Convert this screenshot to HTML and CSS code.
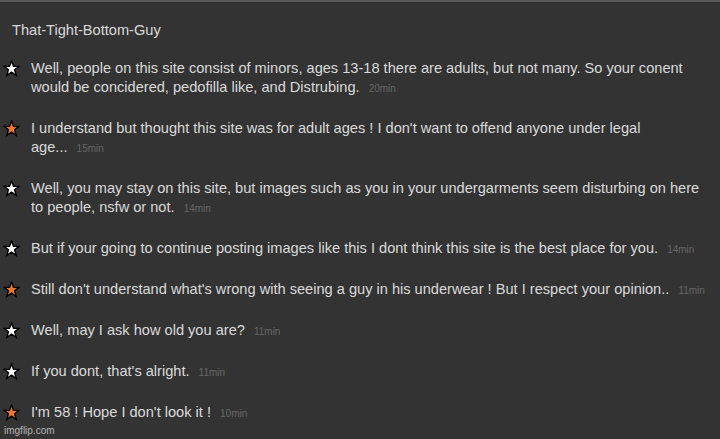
FILE: index.html
```html
<!DOCTYPE html>
<html>
<head>
<meta charset="utf-8">
<link rel="stylesheet" href="styles.css">
</head>
<body>
<div class="page">
  <div class="title">That-Tight-Bottom-Guy</div>
  <div class="list">
    <div class="row">
      <svg class="star" viewBox="0 0 16 16"><polygon class="white" points="8,1 9.9,6 15,6 10.9,9.2 12.4,14.5 8,11.4 3.6,14.5 5.1,9.2 1,6 6.1,6"/></svg>
      <div class="msg">Well, people on this site consist of minors, ages 13-18 there are adults, but not many. So your conent<br>would be concidered, pedofilla like, and Distrubing. <span class="time">20min</span></div>
    </div>
    <div class="row">
      <svg class="star" viewBox="0 0 16 16"><polygon class="orange" points="8,1 9.9,6 15,6 10.9,9.2 12.4,14.5 8,11.4 3.6,14.5 5.1,9.2 1,6 6.1,6"/></svg>
      <div class="msg">I understand but thought this site was for adult ages ! I don't want to offend anyone under legal<br>age... <span class="time">15min</span></div>
    </div>
    <div class="row">
      <svg class="star" viewBox="0 0 16 16"><polygon class="white" points="8,1 9.9,6 15,6 10.9,9.2 12.4,14.5 8,11.4 3.6,14.5 5.1,9.2 1,6 6.1,6"/></svg>
      <div class="msg">Well, you may stay on this site, but images such as you in your undergarments seem disturbing on here<br>to people, nsfw or not. <span class="time">14min</span></div>
    </div>
    <div class="row">
      <svg class="star" viewBox="0 0 16 16"><polygon class="white" points="8,1 9.9,6 15,6 10.9,9.2 12.4,14.5 8,11.4 3.6,14.5 5.1,9.2 1,6 6.1,6"/></svg>
      <div class="msg">But if your going to continue posting images like this I dont think this site is the best place for you. <span class="time">14min</span></div>
    </div>
    <div class="row">
      <svg class="star" viewBox="0 0 16 16"><polygon class="orange" points="8,1 9.9,6 15,6 10.9,9.2 12.4,14.5 8,11.4 3.6,14.5 5.1,9.2 1,6 6.1,6"/></svg>
      <div class="msg">Still don't understand what's wrong with seeing a guy in his underwear ! But I respect your opinion.. <span class="time">11min</span></div>
    </div>
    <div class="row">
      <svg class="star" viewBox="0 0 16 16"><polygon class="white" points="8,1 9.9,6 15,6 10.9,9.2 12.4,14.5 8,11.4 3.6,14.5 5.1,9.2 1,6 6.1,6"/></svg>
      <div class="msg">Well, may I ask how old you are? <span class="time">11min</span></div>
    </div>
    <div class="row">
      <svg class="star" viewBox="0 0 16 16"><polygon class="white" points="8,1 9.9,6 15,6 10.9,9.2 12.4,14.5 8,11.4 3.6,14.5 5.1,9.2 1,6 6.1,6"/></svg>
      <div class="msg">If you dont, that's alright. <span class="time">11min</span></div>
    </div>
    <div class="row">
      <svg class="star" viewBox="0 0 16 16"><polygon class="orange" points="8,1 9.9,6 15,6 10.9,9.2 12.4,14.5 8,11.4 3.6,14.5 5.1,9.2 1,6 6.1,6"/></svg>
      <div class="msg">I'm 58 ! Hope I don't look it ! <span class="time">10min</span></div>
    </div>
  </div>
  <div class="watermark">imgflip.com</div>
</div>
</body>
</html>
```

FILE: styles.css
```css
html, body {
  margin: 0;
  padding: 0;
  background: #333333;
}
.page {
  position: relative;
  width: 720px;
  height: 439px;
  box-sizing: border-box;
  border-top: 2px solid #595959;
  background: #333333;
  font-family: "Liberation Sans", Arial, sans-serif;
  color: #dadada;
  padding-top: 19px;
  overflow: hidden;
}
.title {
  font-size: 14.6px;
  line-height: 19px;
  padding-left: 12px;
}
.list {
  display: flex;
  flex-direction: column;
  gap: 22px;
  margin-top: 19px;
}
.row {
  display: flex;
  align-items: flex-start;
}
.star {
  width: 17px;
  height: 17px;
  margin: 1px 11px 0 3px;
  flex: none;
}
.star polygon {
  stroke: #000;
  stroke-width: 1.3;
  stroke-linejoin: miter;
}
.star .white { fill: #ffffff; }
.star .orange { fill: #f0782a; }
.msg {
  font-size: 14.6px;
  line-height: 19px;
}
.time {
  font-size: 10px;
  line-height: 1;
  color: #676767;
  margin-left: 5px;
}
.watermark {
  position: absolute;
  left: 4px;
  bottom: 3px;
  font-size: 10px;
  color: #b4b4b4;
}
```
